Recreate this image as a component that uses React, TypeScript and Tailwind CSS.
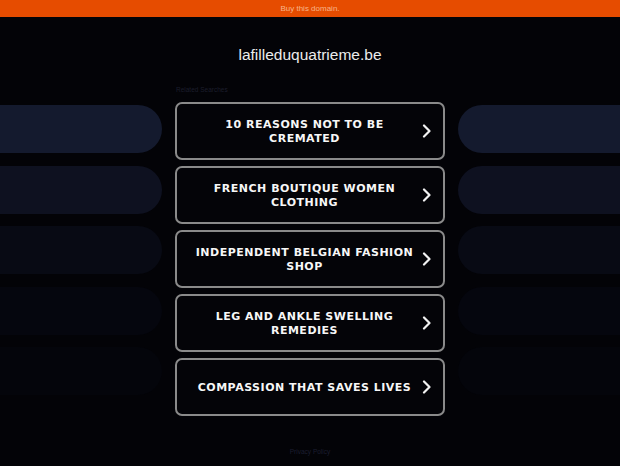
import React from 'react';

const searches = [
  '10 Reasons Not to Be Cremated',
  'French Boutique Women Clothing',
  'Independent Belgian Fashion Shop',
  'Leg and Ankle Swelling Remedies',
  'Compassion That Saves Lives',
];

const pillColors = ['bg-[#141a2e]', 'bg-[#0e1120]', 'bg-[#080a14]', 'bg-[#05060e]', 'bg-[#04050b]'];

const Chevron: React.FC = () => (
  <svg width="10" height="14" viewBox="0 0 10 14" fill="none" className="shrink-0">
    <path d="M2 1.5 L7.5 7 L2 12.5" stroke="#f2f2f2" strokeWidth="2.2" strokeLinecap="round" strokeLinejoin="round" />
  </svg>
);

const PillColumn: React.FC<{ side: 'left' | 'right' }> = ({ side }) => (
  <div className="flex w-[162px] shrink-0 flex-col gap-[12.5px] pt-[21px]">
    {pillColors.map((c, i) => (
      <div
        key={i}
        className={`h-[48px] ${c} ${side === 'left' ? 'rounded-r-full' : 'rounded-l-full'}`}
      />
    ))}
  </div>
);

const App: React.FC = () => {
  return (
    <div className="flex min-h-[466px] flex-col bg-[#030307]" style={{ fontFamily: '"Liberation Sans", Arial, sans-serif' }}>
      <div className="flex h-[17px] items-center justify-center bg-[#e64c00] text-[8px] text-[#f8b48a]">
        Buy this domain.
      </div>

      <div className="mt-[28px] text-center text-[15.5px] leading-[20px] text-[#ececec]">
        lafilleduquatrieme.be
      </div>

      <div className="mt-[19px] flex justify-between">
        <PillColumn side="left" />

        <div className="flex w-[270px] shrink-0 flex-col">
          <div className="h-[12px] pl-[1px] text-[6.5px] leading-[12px] text-[#1c1e2c]">Related Searches</div>
          <div className="mt-[6px] flex flex-col gap-[6px]">
            {searches.map((s) => (
              <div
                key={s}
                className="flex h-[58px] items-center rounded-[7px] border-2 border-[#8a8a8a] bg-[#040408] pl-[16px] pr-[11px] pt-[2px]"
              >
                <span
                  className="flex-1 text-center text-[11px] font-bold uppercase leading-[14px] tracking-[0.5px] text-[#f7f7f7]"
                  style={{ fontFamily: '"DejaVu Sans", Verdana, sans-serif' }}
                >
                  {s}
                </span>
                <span className="ml-[6px] -mt-[2px]">
                  <Chevron />
                </span>
              </div>
            ))}
          </div>
        </div>

        <PillColumn side="right" />
      </div>

      <div className="mt-[31px] text-center text-[6.5px] leading-[10px] text-[#1c1e30]">Privacy Policy</div>
    </div>
  );
};

export default App;
